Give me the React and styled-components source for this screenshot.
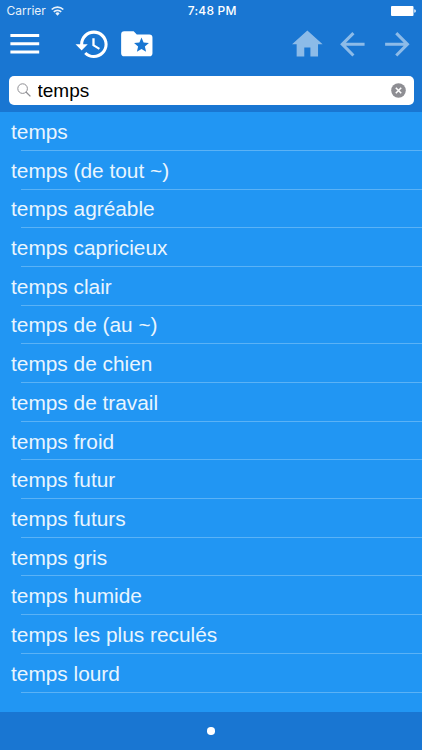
import { useState } from 'react';
import styled, { createGlobalStyle } from 'styled-components';

const GlobalStyle = createGlobalStyle`
  * {
    box-sizing: border-box;
  }
  body {
    margin: 0;
    background-color: #2196f3;
  }
`;

const Screen = styled.div`
  display: flex;
  flex-direction: column;
  width: 100%;
  height: 100vh;
  overflow: hidden;
  background-color: #2196f3;
  font-family: 'Liberation Sans', Arial, sans-serif;
`;

const Header = styled.header`
  flex: none;
  height: 112px;
  background-color: #1976d2;
`;

const StatusBar = styled.div`
  display: grid;
  grid-template-columns: 1fr auto 1fr;
  align-items: center;
  height: 22px;
  padding: 0 6px 0 6.5px;
  color: #fff;
  font-family: Inter, sans-serif;
  font-size: 12px;
  line-height: 22px;
`;

const Carrier = styled.div`
  display: flex;
  align-items: center;
  gap: 5.2px;
  opacity: 0.9;
`;

const Clock = styled.div`
  padding-left: 2px;
  font-weight: 500;
  letter-spacing: 0.2px;
`;

const Battery = styled.svg`
  justify-self: end;
`;

const Toolbar = styled.nav`
  display: flex;
  align-items: center;
  height: 44px;
  padding: 0 6.2px 0 10px;
`;

const ToolButton = styled.button`
  display: flex;
  flex: none;
  margin: 0 0 0 ${(props) => props.$gap || 0}px;
  padding: 0;
  border: none;
  background: none;
  color: #fff;
  opacity: ${(props) => (props.$dim ? 0.5 : 1)};
`;

const Spacer = styled.div`
  flex: 1;
`;

const Icon = styled.svg`
  display: block;
  width: ${(props) => props.$size}px;
  height: ${(props) => props.$size}px;
  fill: currentColor;
`;

const SearchBar = styled.label`
  display: flex;
  align-items: center;
  height: 29px;
  margin: 9.5px 8.5px 0;
  padding: 0 8px;
  border-radius: 5px;
  background-color: #fff;
`;

const SearchInput = styled.input`
  flex: 1;
  min-width: 0;
  height: 29px;
  margin-left: 7px;
  padding: 2px 0 0;
  border: none;
  outline: none;
  background: none;
  color: #000;
  font-family: inherit;
  font-size: 19px;
`;

const ClearButton = styled.button`
  display: flex;
  padding: 0;
  border: none;
  background: none;
`;

const List = styled.ul`
  flex: 1;
  min-height: 0;
  margin: 0;
  padding: 0;
  overflow: hidden;
  list-style: none;
`;

const Row = styled.li`
  display: flex;
  flex-direction: column;
  height: 38.7px;
  color: #e9f5fe;
  font-size: 20.85px;
  line-height: 40px;
  white-space: nowrap;

  & span {
    height: 37.9px;
    padding-left: 11px;
  }
  &::after {
    content: '';
    flex: none;
    height: 1px;
    margin-left: 21px;
    background-color: #5ab2f6;
  }
`;

const Footer = styled.footer`
  display: flex;
  flex: none;
  align-items: center;
  justify-content: center;
  height: 38px;
  background-color: #1976d2;
`;

const PageDot = styled.span`
  width: 7.5px;
  height: 7.5px;
  border-radius: 50%;
  background-color: #fff;
`;

const words = [
  'temps',
  'temps (de tout ~)',
  'temps agréable',
  'temps capricieux',
  'temps clair',
  'temps de (au ~)',
  'temps de chien',
  'temps de travail',
  'temps froid',
  'temps futur',
  'temps futurs',
  'temps gris',
  'temps humide',
  'temps les plus reculés',
  'temps lourd',
];

const icons = {
  history:
    'M13 3c-4.97 0-9 4.03-9 9H1l3.89 3.89.07.14L9 12H6c0-3.87 3.13-7 7-7s7 3.13 7 7-3.13 7-7 7c-1.93 0-3.68-.79-4.94-2.06l-1.42 1.42C8.27 19.99 10.51 21 13 21c4.97 0 9-4.03 9-9s-4.03-9-9-9zm-1 5v5l4.28 2.54.72-1.21-3.5-2.08V8H12z',
  favorites:
    'M17.94 17L15 15.28L12.06 17L12.84 13.67L10.25 11.43L13.66 11.14L15 8L16.34 11.14L19.75 11.43L17.16 13.67L17.94 17M20 6H12L10 4H4A2 2 0 0 0 2 6V18A2 2 0 0 0 4 20H20A2 2 0 0 0 22 18V8A2 2 0 0 0 20 6Z',
  home: 'M10 20v-6h4v6h5v-8h3L12 3 2 12h3v8z',
  back: 'M20 11H7.83l5.59-5.59L12 4l-8 8 8 8 1.41-1.41L7.83 13H20v-2z',
  forward: 'M12 4l-1.41 1.41L16.17 11H4v2h12.17l-5.58 5.59L12 20l8-8z',
};

const ToolIcon = ({ name, size = 36.7 }) => (
  <Icon $size={size} viewBox="0 0 24 24">
    <path d={icons[name]} />
  </Icon>
);

const App = () => {
  const [query, setQuery] = useState('temps');

  return (
    <Screen>
      <GlobalStyle />
      <Header>
        <StatusBar>
          <Carrier>
            Carrier
            <svg width="13" height="10" viewBox="0 0 13 10">
              <g fill="none" stroke="#fff" strokeWidth="1.7">
                <path d="M0.7 3.5a8.2 8.2 0 0 1 11.6 0" />
                <path d="M2.8 5.9a5.2 5.2 0 0 1 7.4 0" />
              </g>
              <path d="M6.5 9.7L4.4 7.5a2.8 2.8 0 0 1 4.2 0z" fill="#fff" />
            </svg>
          </Carrier>
          <Clock>7:48 PM</Clock>
          <Battery width="25" height="10" viewBox="0 0 25 10">
            <rect width="22.5" height="10" rx="1" fill="#fff" />
            <path d="M23.3 3.2q1.5 .3 1.5 1.8t-1.5 1.8z" fill="#fff" />
          </Battery>
        </StatusBar>

        <Toolbar>
          <ToolButton aria-label="Menu">
            <svg width="30" height="20" viewBox="0 0 30 20">
              <path d="M0.4 1.6H29.2M0.4 9.8H29.2M0.4 18H29.2" stroke="#fff" strokeWidth="3" />
            </svg>
          </ToolButton>
          <ToolButton aria-label="History" $gap={33.8}>
            <ToolIcon name="history" />
          </ToolButton>
          <ToolButton aria-label="Favorites" $gap={7.6}>
            <ToolIcon name="favorites" size={37.6} />
          </ToolButton>
          <Spacer />
          <ToolButton aria-label="Home" $dim>
            <ToolIcon name="home" />
          </ToolButton>
          <ToolButton aria-label="Back" $dim $gap={8.1}>
            <ToolIcon name="back" />
          </ToolButton>
          <ToolButton aria-label="Forward" $dim $gap={8.5}>
            <ToolIcon name="forward" />
          </ToolButton>
        </Toolbar>

        <SearchBar>
          <svg width="14" height="14" viewBox="0 0 14 14" fill="none" stroke="#8e8e93">
            <circle cx="5.6" cy="5.6" r="4.8" />
            <path d="M9 9l4.4 4.4" strokeWidth="1.3" />
          </svg>
          <SearchInput value={query} onChange={(e) => setQuery(e.target.value)} />
          <ClearButton aria-label="Clear" onClick={() => setQuery('')}>
            <svg width="15" height="15" viewBox="0 0 15 15">
              <circle cx="7.5" cy="7.5" r="7.3" fill="#8e8e93" />
              <path d="M4.8 4.8l5.4 5.4M10.2 4.8l-5.4 5.4" stroke="#fff" strokeWidth="1.6" />
            </svg>
          </ClearButton>
        </SearchBar>
      </Header>

      <List>
        {words.map((word) => (
          <Row key={word}>
            <span>{word}</span>
          </Row>
        ))}
      </List>

      <Footer>
        <PageDot />
      </Footer>
    </Screen>
  );
};

export default App;
